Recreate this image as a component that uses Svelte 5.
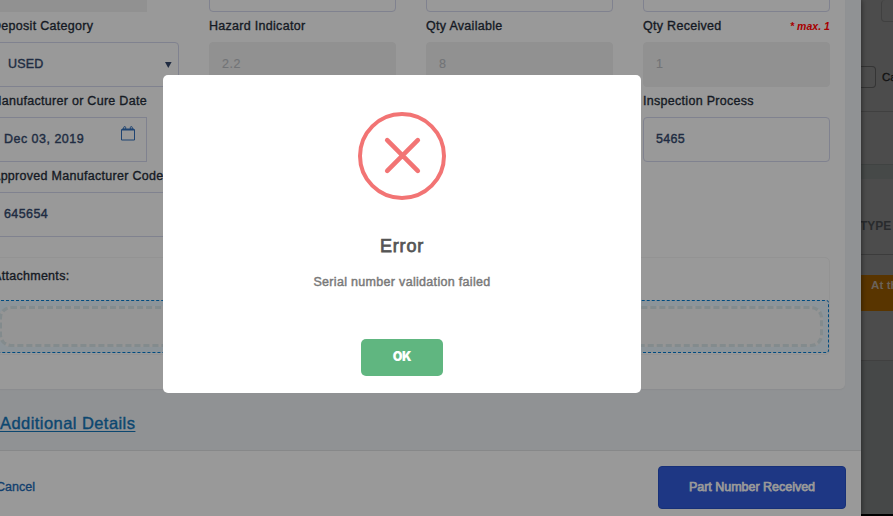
<script>
  const ok = () => {};
</script>

<div class="screen">
  <div class="drawer">
    <div class="body">
      <div class="card">
        <div class="grid">
          <div class="field"><div class="box disabled short"></div></div>
          <div class="field"><div class="box"></div></div>
          <div class="field"><div class="box"></div></div>
          <div class="field"><div class="box"></div></div>

          <div class="field">
            <div class="label">Deposit Category</div>
            <div class="box select"><span>USED</span><svg width="7" height="6" viewBox="0 0 7 6"><path d="M0 0H6.6L3.3 6Z" fill="#202c42" /></svg></div>
          </div>
          <div class="field">
            <div class="label">Hazard Indicator</div>
            <div class="box disabled">2.2</div>
          </div>
          <div class="field">
            <div class="label">Qty Available</div>
            <div class="box disabled">8</div>
          </div>
          <div class="field">
            <div class="label">Qty Received <em>* max. 1</em></div>
            <div class="box disabled">1</div>
          </div>

          <div class="field">
            <div class="label second">Manufacturer or Cure Date</div>
            <div class="box date short">
              <span>Dec 03, 2019</span>
              <svg width="14" height="15" viewBox="0 0 14 15" fill="none" stroke="#1f4472">
                <path d="M.5 3.5h13v10.5H.5z" />
                <path d="M1 3.5h12" stroke-width="2" />
                <path d="M2.7 4V1.6q0-1 1-1t1 1V4M9.3 4V1.6q0-1 1-1t1 1V4" />
              </svg>
            </div>
          </div>
          <div class="field"></div>
          <div class="field"></div>
          <div class="field">
            <div class="label">Inspection Process</div>
            <div class="box">5465</div>
          </div>

          <div class="field wide">
            <div class="label">Approved Manufacturer Code</div>
            <div class="box code">645654</div>
          </div>
        </div>
        <div class="attachments">
          <div class="label att">Attachments:</div>
          <div class="dropzone"><div class="target"></div></div>
        </div>
      </div>
      <div class="more">Additional Details</div>
    </div>
    <div class="footer">
      <span class="cancel">Cancel</span>
      <button class="receive">Part Number Received</button>
    </div>
  </div>
  <div class="page">
    <div class="top"><div class="chip"></div></div>
    <div class="filter"><div class="check"></div><span>Ca</span></div>
    <div class="blank"></div>
    <div class="band"></div>
    <div class="type">TYPE</div>
    <div class="row"><div class="status">At the</div></div>
    <div class="rest"></div>
  </div>
  <div class="modal">
    <svg class="icon" width="88" height="88" viewBox="0 0 88 88" fill="none" stroke="#f27474">
      <circle cx="44" cy="44" r="42" stroke-width="4" />
      <path d="M29.2 28.2L59.8 58.8M59.8 28.2L29.2 58.8" stroke-width="4.6" stroke-linecap="round" />
    </svg>
    <div class="title">Error</div>
    <div class="message">Serial number validation failed</div>
    <button class="ok" onclick={ok}>OK</button>
  </div>
</div>

<style>
  .screen { position: relative; display: flex; width: 893px; height: 516px; overflow: hidden; background: #4c4c4c; font: 12.5px "Liberation Sans", Arial, sans-serif; }
  .screen *, .screen { box-sizing: border-box; }
  .drawer { width: 861px; height: 516px; flex: none; display: flex; flex-direction: column; overflow: hidden; background: #999; box-shadow: 0 0 6px rgba(0, 0, 0, .55); z-index: 1; }
  .body { height: 450px; background: #909294; overflow: hidden; }
  .card { width: 845px; height: 389px; background: #999; border-radius: 0 0 5px 0; overflow: hidden; box-shadow: 0 1px 1px #8b8c8e; }
  .grid { display: grid; grid-template-columns: repeat(4, 187px); grid-template-rows: 12px 75px 75px 75px; column-gap: 30px; margin-left: -8px; }
  .field { display: flex; flex-direction: column; justify-content: flex-end; min-width: 0; }
  .wide { grid-column: span 2; }
  .label { height: 30px; display: flex; justify-content: space-between; line-height: 29px; color: #151a24; white-space: nowrap; -webkit-text-stroke: .35px currentColor; letter-spacing: .29px; }
  .second { margin-left: -1px; }
  .label em { color: #a80000; font-size: 10.5px; font-weight: bold; -webkit-text-stroke: 0; letter-spacing: .05px; }
  .box { height: 45px; flex: none; border: 1px solid #80828f; border-radius: 4px; padding: 0 12px; line-height: 42px; color: #202c42; -webkit-text-stroke: .4px currentColor; letter-spacing: .3px; }
  .disabled { background: #919191; border-color: #919191; color: #727477; -webkit-text-stroke: .15px; letter-spacing: .5px; }
  .short { width: 155px; border-radius: 0; }
  .select { display: flex; justify-content: space-between; align-items: center; padding: 0 6px 0 15px; letter-spacing: .2px; }
  .select span { margin-top: -2px; }
  .date { display: flex; justify-content: space-between; padding-left: 11px; padding-right: 11px; letter-spacing: .48px; }
  .date svg { margin-top: 8px; }
  .code { padding-left: 11px; letter-spacing: .4px; }
  .attachments { height: 98px; width: 838px; margin: 20px 0 0 -8px; border: 1px solid #939393; border-radius: 5px; }
  .att { height: 42px; line-height: 36px; }
  .dropzone { height: 53px; width: 836px; border: 1px dashed #004b80; background: #8c9499; border-radius: 3px; padding: 5px; }
  .target { height: 41px; border: 3px dashed #838b8d; border-radius: 12px; background: #959595; }
  .more { margin-top: 21px; line-height: 26px; font-size: 16.5px; color: #0c4770; text-decoration: underline; text-underline-offset: 2px; letter-spacing: .44px; -webkit-text-stroke: .4px currentColor; }
  .footer { height: 66px; margin-top: 0; border-top: 1px solid #878889; background: #999; display: flex; justify-content: space-between; padding: 15px 15px 0 0; }
  .cancel { margin-left: -4px; line-height: 42px; color: #123f6e; letter-spacing: 0; -webkit-text-stroke: .35px currentColor; }
  button { border: 0; padding: 0; font: inherit; }
  .receive { width: 188px; height: 43px; border-radius: 4px; border: 1px solid #173078; background: #1e3784; color: #999; letter-spacing: -.02px; padding-bottom: 2px; -webkit-text-stroke: .75px currentColor; }
  .page { flex: 1; min-width: 0; display: flex; flex-direction: column; overflow: hidden; border-bottom: 2px solid #000; }
  .top { height: 62px; flex: none; padding-left: 20px; }
  .chip { width: 40px; height: 22px; border: 1px solid #404040; border-top: 0; border-radius: 4px; }
  .filter { height: 50px; flex: none; border-bottom: 1px solid #404040; display: flex; padding-top: 4px; color: #111; }
  .check { width: 15px; height: 22px; border: 1px solid #353535; border-left: 0; border-radius: 0 4px 4px 0; margin-right: 6px; flex: none; }
  .filter span { line-height: 23px; font-size: 11.5px; -webkit-text-stroke: .3px currentColor; }
  .blank { height: 52px; flex: none; }
  .band { height: 15px; flex: none; background: #464948; border-top: 1px solid #404342; }
  .type { height: 76px; flex: none; border-bottom: 1px solid #3c3c3c; line-height: 95px; font-weight: bold; font-size: 12px; color: #292b2d; margin-left: -1px; }
  .row { height: 106px; flex: none; padding-top: 20px; border-bottom: 1px solid #404040; }
  .status { height: 36px; padding-left: 10px; line-height: 21px; white-space: nowrap; background: #593500; color: #6b6259; font-size: 11.5px; font-weight: bold; letter-spacing: .1px; }
  .rest { height: 155px; flex: none; background: #464848; }
  .modal { position: absolute; left: 163px; top: 75px; width: 478px; height: 318px; z-index: 2; background: #fff; border-radius: 5px; display: flex; flex-direction: column; align-items: center; }
  .icon { margin-top: 37px; flex: none; }
  .title { margin-top: 33px; line-height: 26px; font-size: 18px; color: #555; letter-spacing: .85px; -webkit-text-stroke: .75px currentColor; }
  .message { margin-top: 13px; line-height: 20px; color: #797979; letter-spacing: .31px; -webkit-text-stroke: .45px currentColor; }
  .ok { margin-top: 47px; width: 82px; height: 37px; border-radius: 5px; background: #60b680; color: #fff; font: 900 12.5px Inter, "Open Sans", sans-serif; letter-spacing: -.3px; padding-bottom: 2px; }
</style>
